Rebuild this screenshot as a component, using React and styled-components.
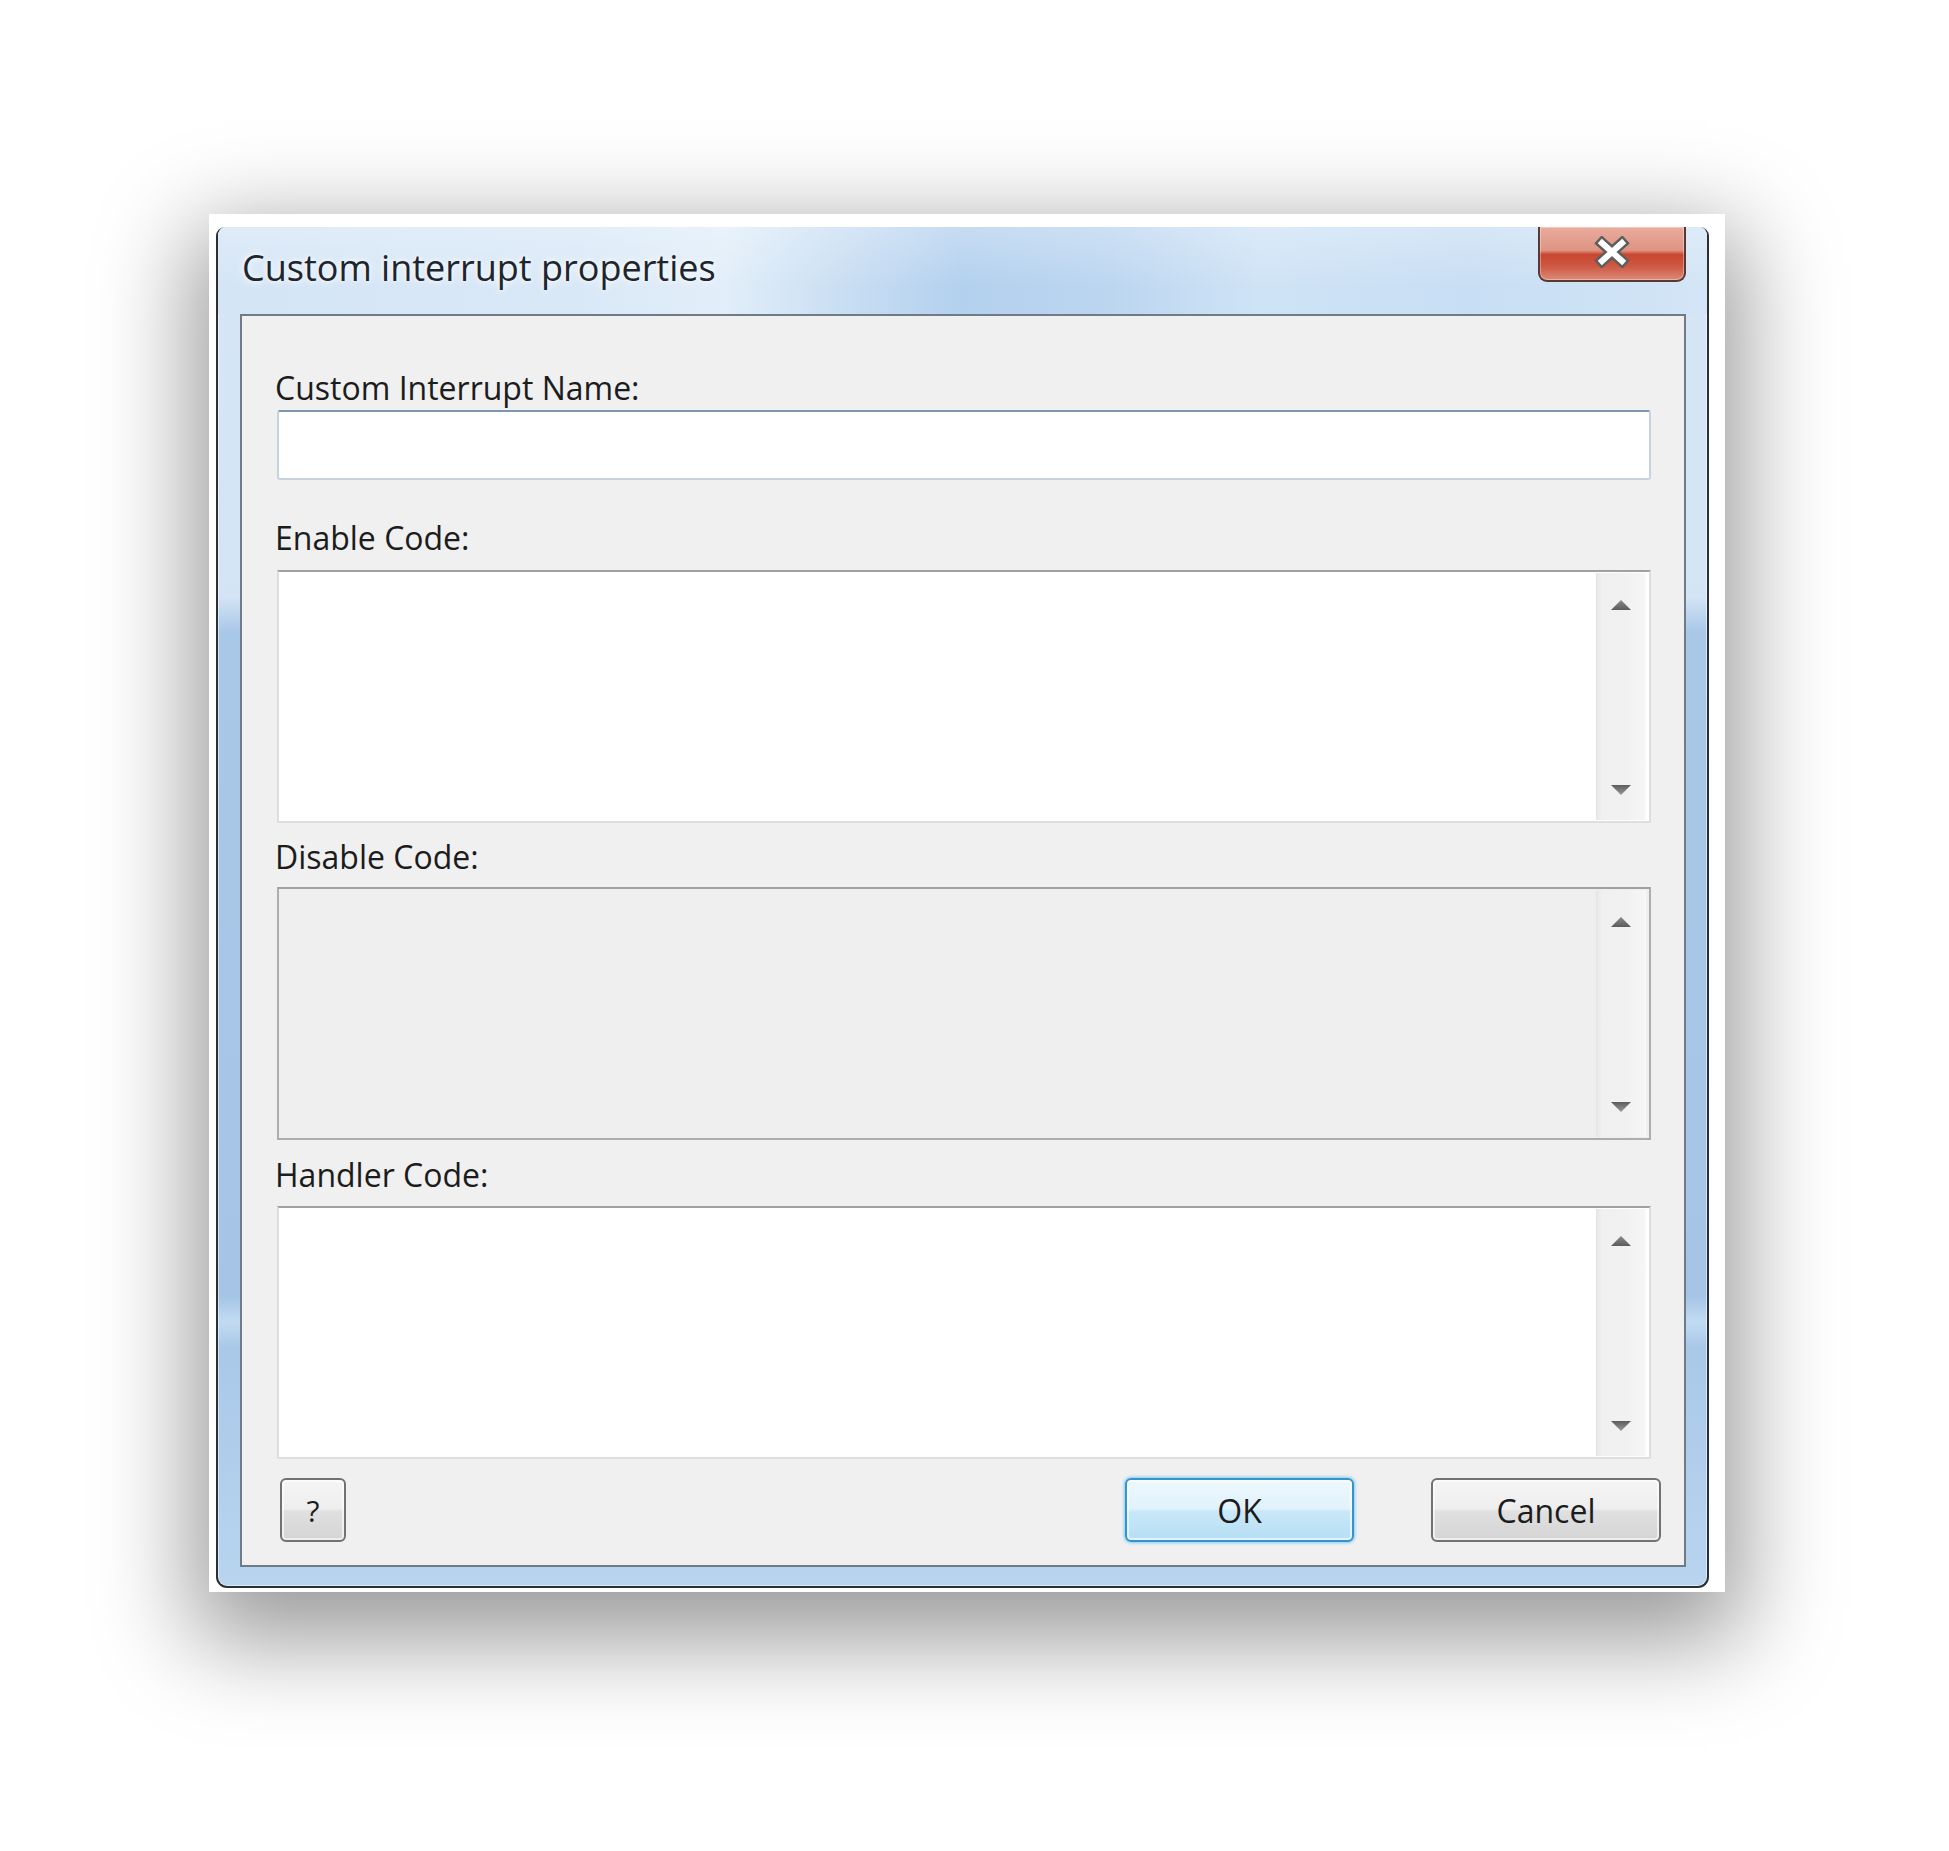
import React from 'react';
import styled, { createGlobalStyle } from 'styled-components';

const GlobalStyle = createGlobalStyle`
  html, body {
    margin: 0;
    padding: 0;
    background: #ffffff;
  }
  body {
    font-family: "Open Sans", "Noto Sans", sans-serif;
  }
`;

const Stage = styled.div`
  min-height: 1851px;
  box-sizing: border-box;
  padding: 214px 0 0 209px;
  overflow: hidden;
`;

// white photo border with the drop shadow
const PhotoFrame = styled.div`
  width: 1516px;
  box-sizing: border-box;
  padding: 13px 16px 4px 7px;
  background: #ffffff;
  box-shadow: 0 32px 90px 16px rgba(0, 0, 0, 0.4);
`;

const Window = styled.div`
  display: flex;
  flex-direction: column;
  border: 2px solid #2c3036;
  border-top: 0;
  border-radius: 9px 9px 11px 11px;
  overflow: hidden;
  background: linear-gradient(
    180deg,
    #d6e6f6 0px,
    #d3e4f5 370px,
    #a9c8e8 405px,
    #a6c5e6 1070px,
    #c2dbf2 1095px,
    #a9c8e8 1120px,
    #b8d4ef 100%
  );
  box-shadow: inset 0 0 0 1px rgba(255, 255, 255, 0.5);
`;

const TitleBar = styled.div`
  height: 87px;
  display: flex;
  justify-content: space-between;
  align-items: flex-start;
  padding: 0 21px 0 24px;
  background:
    linear-gradient(180deg, rgba(255, 255, 255, 0.25), rgba(255, 255, 255, 0) 70%),
    linear-gradient(
      90deg,
      #d4e5f6 0%,
      #d9e8f7 24%,
      #e2eef9 34%,
      #c9def3 42%,
      #b3d0ee 50%,
      #bcd6f0 60%,
      #cfe3f6 70%,
      #c8def4 84%,
      #d3e5f6 100%
    );
`;

const Title = styled.div`
  margin-top: 21px;
  font-size: 36px;
  line-height: 40px;
  color: #1d252e;
  white-space: nowrap;
  text-shadow: 0 0 10px rgba(255, 255, 255, 0.9), 0 0 4px rgba(255, 255, 255, 0.8);
`;

const CloseButton = styled.div`
  width: 148px;
  height: 55px;
  box-sizing: border-box;
  padding-bottom: 4px;
  display: flex;
  align-items: center;
  justify-content: center;
  border: 2px solid #5a3833;
  border-top: 0;
  border-radius: 0 0 9px 9px;
  background: linear-gradient(
    180deg,
    #e9ab9d 0%,
    #de9483 44%,
    #c9452f 52%,
    #cd5843 74%,
    #dc8b78 100%
  );
  box-shadow: inset 0 0 0 1px rgba(255, 255, 255, 0.35);
`;

const Frame = styled.div`
  padding: 0 21px 19px 22px;
`;

const Client = styled.div`
  display: flex;
  flex-direction: column;
  border: 2px solid #6f7b87;
  background: #f0f0f0;
  padding: 57px 33px 23px 35px;
`;

const Label = styled.div`
  height: 30px;
  line-height: 30px;
  font-size: 32px;
  color: #1c1c1c;
  white-space: nowrap;
  margin-left: -2px;
  margin-top: ${(p) => p.$above || 0}px;
  margin-bottom: ${(p) => p.$below || 0}px;
`;

const TextBox = styled.div`
  height: 70px;
  box-sizing: border-box;
  background: #ffffff;
  border: 2px solid #c6d3df;
  border-top-color: #7f97ae;
  border-radius: 3px;
`;

const CodeBox = styled.div`
  height: 253px;
  box-sizing: border-box;
  display: flex;
  border: 2px solid ${(p) => (p.$disabled ? '#adadad' : '#dedede')};
  border-top-color: #a0a0a0;
  background: ${(p) => (p.$disabled ? '#efefef' : '#ffffff')};
`;

const Editor = styled.div`
  flex: 1;
`;

const ScrollBar = styled.div`
  width: 50px;
  margin: 1px 3px 1px 0;
  box-sizing: border-box;
  padding: 26px 0 24px;
  display: flex;
  flex-direction: column;
  justify-content: space-between;
  align-items: center;
  border-left: 1px solid #e4e4e4;
  border-right: 1px solid #fafafa;
  background: linear-gradient(90deg, #e8e8e8 0, #f0f0f0 5px, #f1f1f1 60%, #f6f6f6 100%);
`;

const ButtonRow = styled.div`
  display: flex;
  align-items: center;
  height: 64px;
  margin: 19px -10px 0 3px;
`;

const Spacer = styled.div`
  flex: 1;
`;

const PushButton = styled.div`
  width: ${(p) => p.$w}px;
  height: 64px;
  box-sizing: border-box;
  margin-left: ${(p) => p.$gap || 0}px;
  display: flex;
  align-items: center;
  justify-content: center;
  font-size: ${(p) => p.$size || 32}px;
  color: #1c1c1c;
  border-radius: 6px;
  border: 2px solid ${(p) => (p.$primary ? '#3593cf' : '#727272')};
  background: ${(p) =>
    p.$primary
      ? 'linear-gradient(180deg, #eef8fd 0%, #e0f2fc 48%, #c9e8f8 52%, #b6def4 100%)'
      : 'linear-gradient(180deg, #f5f5f5 0%, #eeeeee 48%, #e0e0e0 52%, #d4d4d4 100%)'};
  box-shadow: ${(p) =>
    p.$primary
      ? 'inset 0 0 0 2px rgba(255, 255, 255, 0.6), 0 0 3px 1px rgba(80, 190, 240, 0.7)'
      : 'inset 0 0 0 2px rgba(255, 255, 255, 0.6)'};
`;

function Arrow({ down }) {
  return (
    <svg width="22" height="12" viewBox="0 0 22 12">
      <defs>
        <linearGradient id={down ? 'arrDown' : 'arrUp'} x1="0" y1="0" x2="0" y2="1">
          <stop offset="0" stopColor={down ? '#5c5c5c' : '#8a8a8a'} />
          <stop offset="1" stopColor={down ? '#9a9a9a' : '#5c5c5c'} />
        </linearGradient>
      </defs>
      <path
        d={down ? 'M1 1 H21 L11 11 Z' : 'M11 1 L21 11 H1 Z'}
        fill={`url(#${down ? 'arrDown' : 'arrUp'})`}
      />
    </svg>
  );
}

function CloseGlyph() {
  return (
    <svg width="36" height="32" viewBox="0 0 36 32">
      <path d="M8 7 L28 25 M28 7 L8 25" stroke="#5e5e5e" strokeWidth="11" strokeLinecap="square" />
      <path d="M8 7 L28 25 M28 7 L8 25" stroke="#ffffff" strokeWidth="6" strokeLinecap="square" />
    </svg>
  );
}

function CodeField({ disabled }) {
  return (
    <CodeBox $disabled={disabled}>
      <Editor />
      <ScrollBar>
        <Arrow />
        <Arrow down />
      </ScrollBar>
    </CodeBox>
  );
}

export default function App() {
  return (
    <>
      <GlobalStyle />
      <Stage>
        <PhotoFrame>
          <Window>
            <TitleBar>
              <Title>Custom interrupt properties</Title>
              <CloseButton>
                <CloseGlyph />
              </CloseButton>
            </TitleBar>
            <Frame>
              <Client>
                <Label $below={7}>Custom Interrupt Name:</Label>
                <TextBox />
                <Label $above={43} $below={17}>Enable Code:</Label>
                <CodeField />
                <Label $above={19} $below={15}>Disable Code:</Label>
                <CodeField disabled />
                <Label $above={20} $below={16}>Handler Code:</Label>
                <CodeField />
                <ButtonRow>
                  <PushButton $w={66} $size={30}>?</PushButton>
                  <Spacer />
                  <PushButton $w={229} $primary>OK</PushButton>
                  <PushButton $w={230} $gap={77}>Cancel</PushButton>
                </ButtonRow>
              </Client>
            </Frame>
          </Window>
        </PhotoFrame>
      </Stage>
    </>
  );
}
